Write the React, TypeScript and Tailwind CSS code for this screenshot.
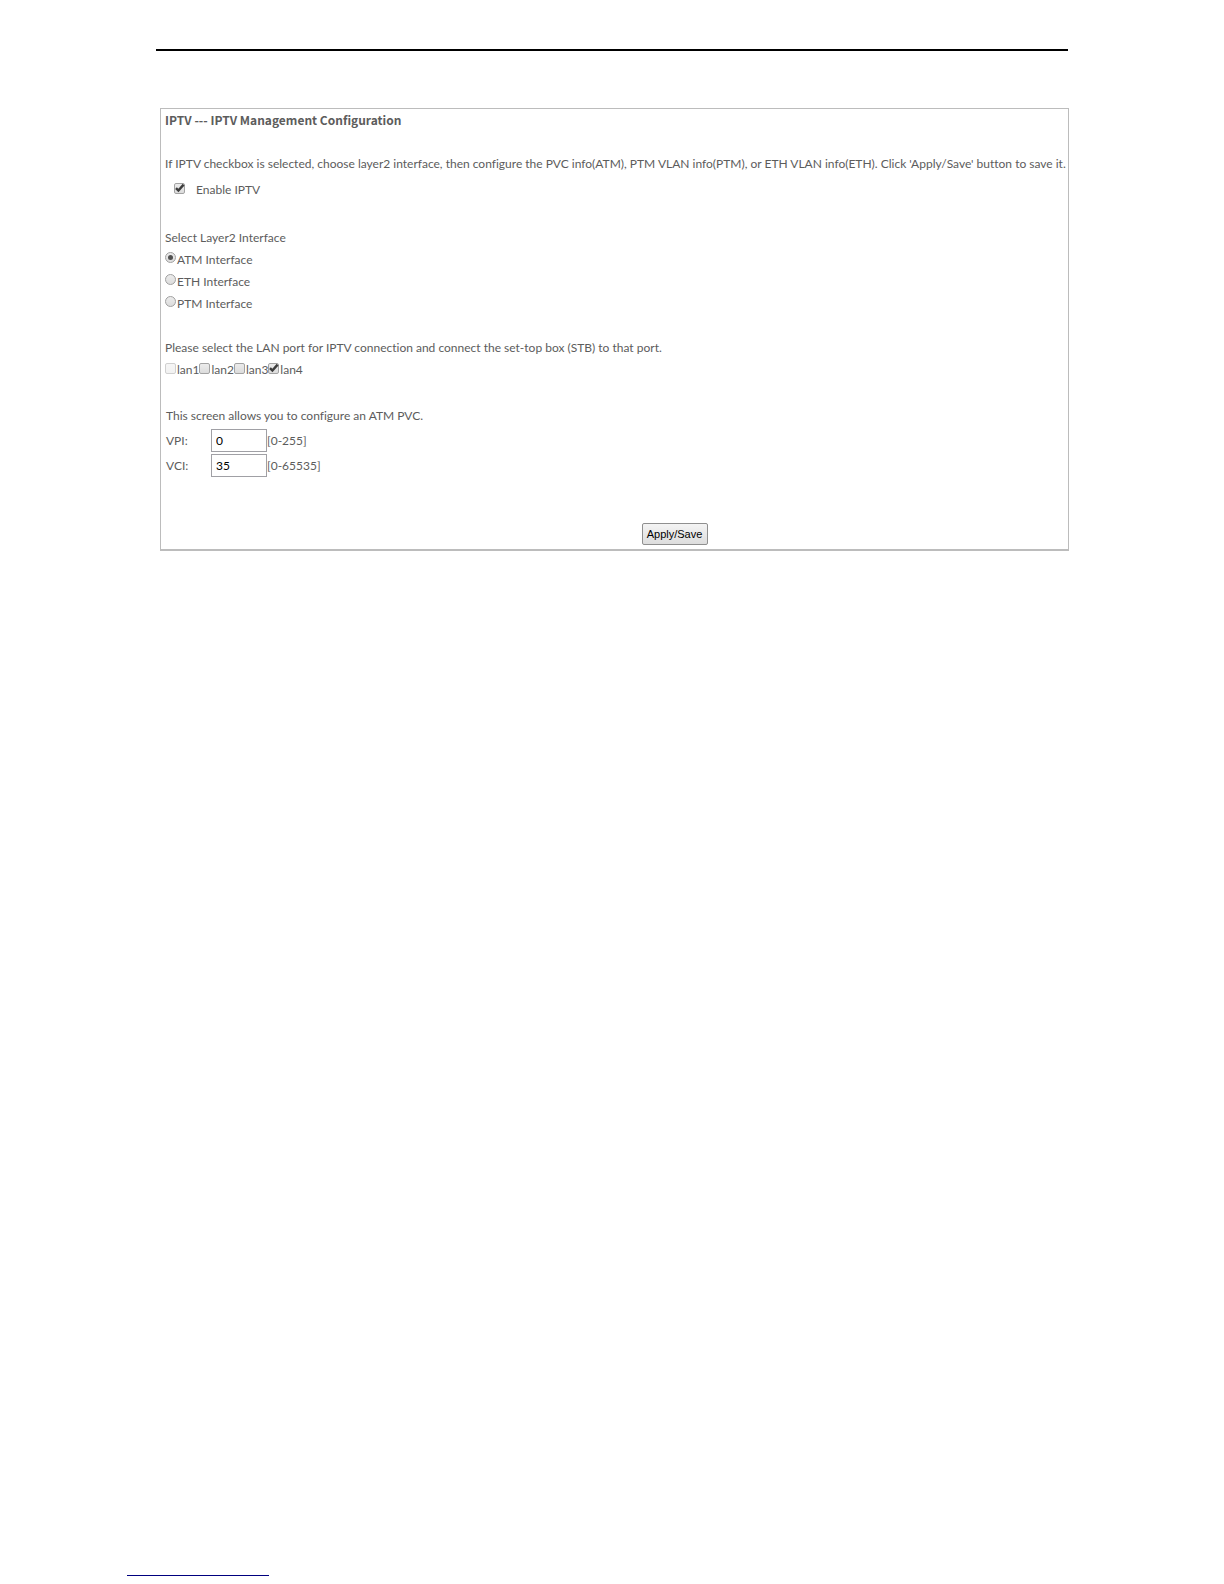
import { useState } from "react";

const layer2Interfaces = ["ATM", "ETH", "PTM"];
const lanPorts = ["lan1", "lan2", "lan3", "lan4"];
const pvcFields = [
  { name: "VPI", initial: "0", range: "[0-255]" },
  { name: "VCI", initial: "35", range: "[0-65535]" },
];

type CheckboxProps = {
  id: string;
  defaultChecked?: boolean;
  disabled?: boolean;
};

const Checkbox = ({ id, defaultChecked, disabled }: CheckboxProps) => (
  <span className="relative mt-1 block size-[11px] shrink-0">
    <input
      id={id}
      type="checkbox"
      defaultChecked={defaultChecked}
      disabled={disabled}
      className="peer block size-[11px] appearance-none rounded-xs border border-[#a3a3a3] bg-linear-to-b from-[#ececec] to-[#dcdcdc] disabled:border-[#d0d0d0] disabled:from-[#f6f6f6] disabled:to-[#f1f1f1]"
    />
    <svg
      viewBox="0 0 11 11"
      className="pointer-events-none absolute inset-0 hidden size-[11px] peer-checked:block"
      fill="none"
      stroke="#3c3c3c"
      strokeWidth="2.4"
    >
      <path d="M2 5.2 4.4 7.6 9.6 1.6" />
    </svg>
  </span>
);

const Radio = ({ id, defaultChecked }: CheckboxProps) => (
  <span className="relative mt-[3px] block size-[11px] shrink-0">
    <input
      id={id}
      type="radio"
      name="layer2"
      defaultChecked={defaultChecked}
      className="peer block size-[11px] appearance-none rounded-full border border-[#a0a0a0] bg-linear-to-b from-[#ececec] to-[#dcdcdc]"
    />
    <span className="pointer-events-none absolute inset-[3px] hidden rounded-full bg-[#505050] peer-checked:block" />
  </span>
);

const PvcField = ({ name, initial, range }: (typeof pvcFields)[number]) => {
  const [value, setValue] = useState(initial);
  return (
    <div className="flex items-center">
      <label htmlFor={name} className="w-[45px]">
        {name}:
      </label>
      <input
        id={name}
        type="text"
        value={value}
        onChange={(e) => setValue(e.target.value)}
        className="h-[23px] w-14 border border-[#a0a0a5] px-1 text-black"
      />
      <span>{range}</span>
    </div>
  );
};

export default function App() {
  return (
    <div className="flex min-h-screen flex-col bg-white font-['Lato',sans-serif] text-[12px] leading-[22px] text-[#5c5c5c] [font-variant-ligatures:none]">
      <main className="px-[156px] pt-[49px]">
        <hr className="border-t-2 border-black" />
        <form
          onSubmit={(e) => e.preventDefault()}
          className="-mr-px ml-1 mt-[57px] border border-b-2 border-[#bcbcbc] pb-1 pl-1"
        >
          <h1 className="font-['Noto_Sans_CJK_SC',sans-serif] font-bold">
            IPTV --- IPTV Management Configuration
          </h1>
          <p className="mt-[22px]">
            If IPTV checkbox is selected, choose layer2 interface, then
            configure the PVC info(ATM), PTM VLAN info(PTM), or ETH VLAN
            info(ETH). Click 'Apply/Save' button to save it.
          </p>
          <div className="mt-1 flex gap-[11px] pl-[9px]">
            <Checkbox id="enable" defaultChecked />
            <label htmlFor="enable">Enable IPTV</label>
          </div>

          <fieldset className="mt-[26px]">
            <legend>Select Layer2 Interface</legend>
            {layer2Interfaces.map((name, i) => (
              <div key={name} className="flex gap-px">
                <Radio id={name} defaultChecked={i === 0} />
                <label htmlFor={name}>{name} Interface</label>
              </div>
            ))}
          </fieldset>

          <fieldset className="mt-[22px]">
            <legend>
              Please select the LAN port for IPTV connection and connect the
              set-top box (STB) to that port.
            </legend>
            <div className="flex">
              {lanPorts.map((port) => (
                <div key={port} className="flex gap-px">
                  <Checkbox
                    id={port}
                    disabled={port === "lan1"}
                    defaultChecked={port === "lan4"}
                  />
                  <label htmlFor={port}>{port}</label>
                </div>
              ))}
            </div>
          </fieldset>

          <section className="mt-6 space-y-0.5 pl-px">
            <p>This screen allows you to configure an ATM PVC.</p>
            {pvcFields.map((field) => (
              <PvcField key={field.name} {...field} />
            ))}
          </section>

          <div className="mt-[46px] flex justify-center pl-[116px]">
            <button
              type="submit"
              className="h-[22px] w-[66px] rounded-xs border border-[#8f8f8f] bg-linear-to-b from-[#f4f4f4] to-[#dddddd] font-['Liberation_Sans',sans-serif] text-[11px] leading-5 text-black"
            >
              Apply/Save
            </button>
          </div>
        </form>
      </main>
      <footer className="mt-auto pb-2 pl-[127px]">
        <div className="h-px w-[142px] bg-[#00007f]" />
      </footer>
    </div>
  );
}
